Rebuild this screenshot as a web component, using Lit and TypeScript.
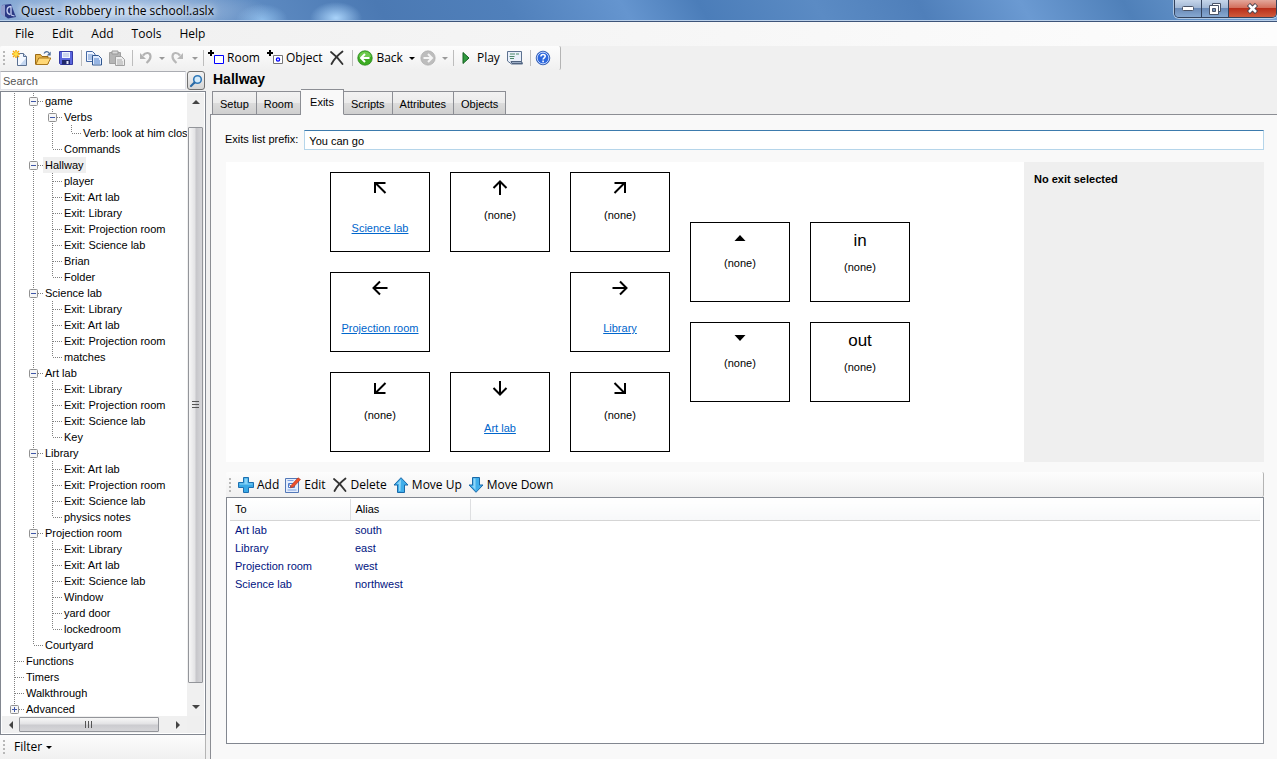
import { LitElement, html, svg, css, nothing, SVGTemplateResult } from "lit";
import { customElement, property, state } from "lit/decorators.js";
import { classMap } from "lit/directives/class-map.js";

const ICONS: Record<string, SVGTemplateResult> = {
  fresh: svg`<path d="M5.500 3.500h6l3 3v9h-9z" fill="#f4f8ff" stroke="#5b7192"/><path d="M11.500 3.500v3h3" fill="#cddcf2" stroke="#5b7192"/><path d="M14 8v7H8z" fill="#c3d6f0"/><path d="M4 0v8M0 4h8M1 1l6 6M7 1L1 7" stroke="#f5a500" stroke-width="1.400"/><circle cx="4" cy="4" r="2" fill="#ffe14a"/>`,
  open: svg`<path d="M.5 14V4.500h5l1.500 2h6V14z" fill="#e9b84e" stroke="#9b6a14"/><path d="M.8 14.500l3-6.500h12l-3.300 6.500z" fill="#ffd877" stroke="#a8761c"/><path d="M9 3.500c1.500-2.500 4-2.500 5-.2" fill="none" stroke="#4d6d9a" stroke-width="1.200"/><path d="M15.700 1.500v4h-4z" fill="#4d6d9a"/>`,
  save: svg`<path d="M1.500 1.500h13v13h-12l-1-1z" fill="#5b66dd" stroke="#363ba5"/><path d="M4 2h8v6H4z" fill="#eef3ff"/><path d="M5 4h6M5 6h6" stroke="#a9b4dc"/><path d="M4 10h8v4.500H4z" fill="#20286a"/><path d="M8.500 11h2v3h-2z" fill="#e4e8ff"/>`,
  copy: svg`<path d="M.5 1.500h6l2.500 2.500v7.500h-8.500z" fill="#eef4ff" stroke="#466aa6"/><path d="M2 5h5M2 7h5M2 9h5" stroke="#6d93cf"/><path d="M6.500 5.500h6l3 3v6.500h-9z" fill="#e0ebff" stroke="#2f568f"/><path d="M8 9h5M8 11h6M8 13h6" stroke="#4f80c8"/>`,
  paste: svg`<path d="M.5 2.500h11v11H.5z" fill="#b5b5b5" stroke="#a0a0a0"/><path d="M3 1h6v3H3z" fill="#d9d9d9" stroke="#999"/><path d="M6.500 6.500h6l3 3v6h-9z" fill="#eee" stroke="#a0a0a0"/><path d="M8 10h5M8 12h6M8 14h6" stroke="#aaa"/>`,
  undo: svg`<path d="M6 5.500C8.500 2 13.500 2 13.500 6.500c0 3-1.500 4.500-4 6.500" fill="none" stroke="#b2b2b2" stroke-width="2.200"/><path d="M3 3v6h6z" fill="#b2b2b2"/>`,
  redo: svg`<path d="M10 5.500C7.500 2 2.500 2 2.500 6.500c0 3 1.500 4.500 4 6.500" fill="none" stroke="#b8b8b8" stroke-width="2.200"/><path d="M13 3v6H7z" fill="#b8b8b8"/>`,
  room: svg`<path d="M3 0v6M0 3h6" stroke="#000" stroke-width="2"/><path d="M6.500 5.500h9v8h-9z" fill="#fff" stroke="#0000ff"/>`,
  object: svg`<path d="M3 0v6M0 3h6" stroke="#000" stroke-width="2"/><path d="M6.500 5.500h9v8h-9z" fill="#fff" stroke="#777"/><circle cx="11" cy="9.500" r="1.600" fill="none" stroke="#0000ff" stroke-width="1.300"/>`,
  cross: svg`<path d="M2 2c4 3 8 7 11.500 12M13.500 1.500C9 5 5 9 2.500 14" fill="none" stroke="#333" stroke-width="1.800" stroke-linecap="round"/>`,
  back: svg`<circle cx="8" cy="8" r="7.300" fill="#3cab22" stroke="#1f7a12" stroke-width=".6"/><path d="M2 7a6 5.500 0 0 1 12 0z" fill="#8fe06c" opacity=".6"/><path d="M12.500 8H5M8 4L4 8l4 4" fill="none" stroke="#fff" stroke-width="2"/>`,
  forward: svg`<circle cx="8" cy="8" r="7.200" fill="#bdbdbd" stroke="#a6a6a6" stroke-width=".6"/><path d="M3.500 8H11M8 4l4 4-4 4" fill="none" stroke="#f5f5f5" stroke-width="2"/>`,
  play: svg`<path d="M5 2.500v11l6-5.500z" fill="#2f9b3e" stroke="#14601f"/>`,
  script: svg`<path d="M.5 1.500h14v10l1 2.500H4.500L.5 11z" fill="#e9f0fa" stroke="#5d7290"/><path d="M3 4h5M9 4h3M2.500 6.500h5M3 8.500h4" stroke="#4c8a6a"/><path d="M4 11.500h10.500l.5 2H5z" fill="#9cadc6" stroke="#50637f"/>`,
  help: svg`<circle cx="8" cy="8" r="6.800" fill="#2d67dd" stroke="#2450a6" stroke-width=".8"/><circle cx="8" cy="8" r="5.800" fill="none" stroke="#cfdfff" stroke-width=".9"/><path d="M5.900 6.600c0-2.800 4.300-2.700 4.300-.3 0 1.500-2.100 1.500-2.100 3.200M8.100 10.500v1.700" fill="none" stroke="#fff" stroke-width="1.600"/>`,
  add: svg`<path d="M5.500.5h5v5h5v5h-5v5h-5v-5h-5v-5h5z" fill="#3aa9e6" stroke="#1c6fb0"/><path d="M6.500 1.500h3v5h5v1h-13v-1h5z" fill="#8bd5f8"/>`,
  edit: svg`<path d="M.5 1.500h13v14H.5z" fill="#e4edfc" stroke="#5378b8"/><path d="M2.500 3.500h6M2.500 13h9" stroke="#7da0e0"/><path d="M3.500 6.500h6v4h-6z" fill="#fff" stroke="#4b79cd"/><path d="M4.500 7.500l1.500 2.500 1-.5" fill="none" stroke="#2c3f8c"/><path d="M6 8.500L13 .8l2.500 1.700L8.500 10l-3 .8z" fill="#ee4e2b" stroke="#a8381e" stroke-width=".6"/>`,
  up: svg`<path d="M8 .7l7 7.300h-3.500v7.500h-7V8H1z" fill="#40aeea" stroke="#1a69a8"/><path d="M8 2.500L4 7h2v7h1.500z" fill="#8fd6f8"/>`,
  down: svg`<path d="M8 15.300L15 8h-3.500V.5h-7V8H1z" fill="#40aeea" stroke="#1a69a8"/><path d="M5.500 1.500h2V13L4 9h1.500z" fill="#8fd6f8"/>`,
  find: svg`<circle cx="9.500" cy="6.500" r="3.800" fill="#d4ebfb" stroke="#2f78b8" stroke-width="1.600"/><path d="M6.500 9.500L3 13" stroke="#2a6aa6" stroke-width="2.200" stroke-linecap="round"/>`,
  logo: svg`<path d="M1 2l9-1 3 8 2 5-8 1.500L1 11z" fill="#2b3a85"/><path d="M0 2.500l4-.8v12.600L0 11z" fill="#8f9ccc"/><path d="M9.500 3.500c-4.500.5-4.500 7-.5 8M10 3v9M10 12l3.500 1" fill="none" stroke="#c6d0f2" stroke-width="1.300"/>`,
  n: svg`<path d="M8 15V1.500M1.500 8L8 1.500 14.500 8" fill="none" stroke="#000" stroke-width="2"/>`,
  s: svg`<path d="M8 1v13.500M1.500 8L8 14.500 14.500 8" fill="none" stroke="#000" stroke-width="2"/>`,
  w: svg`<path d="M15.500 8H2M8 1.500L1.500 8 8 14.500" fill="none" stroke="#000" stroke-width="2"/>`,
  e: svg`<path d="M.5 8H14M8 1.500L14.500 8 8 14.500" fill="none" stroke="#000" stroke-width="2"/>`,
  nw: svg`<path d="M13.500 13L3.500 3M3 13V3h10.500" fill="none" stroke="#000" stroke-width="2"/>`,
  ne: svg`<path d="M2.500 13l10-10M13 13V3H2.500" fill="none" stroke="#000" stroke-width="2"/>`,
  sw: svg`<path d="M13.500 3L3.500 13M3 3v10h10.500" fill="none" stroke="#000" stroke-width="2"/>`,
  se: svg`<path d="M2.500 3l10 10M13 3v10H2.500" fill="none" stroke="#000" stroke-width="2"/>`,
  tup: svg`<path d="M2.500 11L8 5l5.500 6z"/>`,
  tdown: svg`<path d="M2.500 5L8 11l5.500-6z"/>`,
};

const icon = (name: string) => html`<svg class="icon" viewBox="0 0 16 16" width="16" height="16" aria-hidden="true">${ICONS[name]}</svg>`;

type Row = [guides: string, label: string];

// One letter per indent column: "|" passing line, "+" branch, "L" last branch,
// "-" open branch, "x" closed last branch.
const TREE: Row[] = [
  ["|-", "game"],
  ["||-", "Verbs"],
  ["|||L", "Verb: look at him close"],
  ["||L", "Commands"],
  ["|-", "Hallway"],
  ["||+", "player"],
  ["||+", "Exit: Art lab"],
  ["||+", "Exit: Library"],
  ["||+", "Exit: Projection room"],
  ["||+", "Exit: Science lab"],
  ["||+", "Brian"],
  ["||L", "Folder"],
  ["|-", "Science lab"],
  ["||+", "Exit: Library"],
  ["||+", "Exit: Art lab"],
  ["||+", "Exit: Projection room"],
  ["||L", "matches"],
  ["|-", "Art lab"],
  ["||+", "Exit: Library"],
  ["||+", "Exit: Projection room"],
  ["||+", "Exit: Science lab"],
  ["||L", "Key"],
  ["|-", "Library"],
  ["||+", "Exit: Art lab"],
  ["||+", "Exit: Projection room"],
  ["||+", "Exit: Science lab"],
  ["||L", "physics notes"],
  ["|-", "Projection room"],
  ["||+", "Exit: Library"],
  ["||+", "Exit: Art lab"],
  ["||+", "Exit: Science lab"],
  ["||+", "Window"],
  ["||+", "yard door"],
  ["||L", "lockedroom"],
  ["|L", "Courtyard"],
  ["+", "Functions"],
  ["+", "Timers"],
  ["+", "Walkthrough"],
  ["x", "Advanced"],
];

@customElement("quest-tree")
class QuestTree extends LitElement {
  @state() selected = 4;

  static styles = css`
    :host { display: flex; flex: 1; min-height: 0; border: 1px solid #828790; background: #fff; padding: 1px; box-sizing: border-box; }
    .grid { flex: 1; min-width: 0; display: grid; grid-template-columns: minmax(0, 1fr) 17px; grid-template-rows: minmax(0, 1fr) 17px; }
    .rows { list-style: none; margin: 0; padding: 0 0 0 3px; overflow: hidden; }
    .row { display: flex; height: 16px; white-space: nowrap; cursor: default; }
    .guide { flex: none; display: block; }
    .text { font: 11px/16px "Liberation Sans", Arial, sans-serif; padding: 0 2px; }
    .picked { background: #efefef; }
    .bar { display: flex; align-items: center; background: #f0f0f0; }
    .vertical { flex-direction: column; }
    .end { flex: none; display: flex; align-items: center; justify-content: center; width: 17px; height: 17px; }
    .thumb { display: flex; align-items: center; justify-content: center; box-sizing: border-box; border: 1px solid #93959a; border-radius: 1px; }
    .vertical .thumb { width: 15px; flex: 558; background: linear-gradient(90deg, #f7f7f7, #e3e3e5 45%, #c6c6ca 55%, #d6d6d9); }
    .across .thumb { height: 15px; flex: 140; background: linear-gradient(#f7f7f7, #e3e3e5 45%, #cbcbcf 55%, #d6d6d9); }
    .vertical .before { flex: 17; }
    .vertical .after { flex: 16; }
    .across .after { flex: 11; }
    .corner { background: #efefef; }
  `;

  private guide(kind: string) {
    const box = kind === "-" || kind === "x";
    const down = kind === "|" || kind === "+" || kind === "-";
    return html`<svg class="guide" width="19" height="16" viewBox="0 0 19 16" aria-hidden="true">
      <path d=${down ? "M9.5 0v16" : "M9.5 0v8"} stroke="#808080" stroke-dasharray="1 1"/>
      ${kind === "|" ? nothing : svg`<path d="M10 8.500h9" stroke="#808080" stroke-dasharray="1 1"/>`}
      ${box ? svg`<rect x="5.500" y="4.500" width="8" height="8" rx="1" fill="#f6f6f6" stroke="#919191"/><path d=${kind === "x" ? "M7 8.5h5M9.5 6v5" : "M7 8.5h5"} stroke="#3f57a8"/>` : nothing}
    </svg>`;
  }

  render() {
    return html`<div class="grid">
      <ul class="rows" role="tree">
        ${TREE.map(([guides, label], i) => html`<li class="row" role="treeitem" aria-level=${guides.length} aria-selected=${i === this.selected} @click=${() => (this.selected = i)}>
          ${[...guides].map((g) => this.guide(g))}<span class=${classMap({ text: true, picked: i === this.selected })}>${label}</span>
        </li>`)}
      </ul>
      <div class="bar vertical">
        <span class="end"><svg width="8" height="5"><path d="M0 5l4-4 4 4z" fill="#444"/></svg></span>
        <span class="before"></span>
        <span class="thumb"><svg width="8" height="8"><path d="M0 .5h7M0 3.500h7M0 6.500h7" stroke="#555"/></svg></span>
        <span class="after"></span>
        <span class="end"><svg width="8" height="5"><path d="M0 0l4 4 4-4z" fill="#444"/></svg></span>
      </div>
      <div class="bar across">
        <span class="end"><svg width="5" height="8"><path d="M5 0L1 4l4 4z" fill="#444"/></svg></span>
        <span class="thumb"><svg width="8" height="8"><path d="M.5 0v7M3.500 0v7M6.500 0v7" stroke="#555"/></svg></span>
        <span class="after"></span>
        <span class="end"><svg width="5" height="8"><path d="M0 0l4 4-4 4z" fill="#444"/></svg></span>
      </div>
      <span class="corner"></span>
    </div>`;
  }
}

@customElement("exit-box")
class ExitBox extends LitElement {
  @property() glyph = "";
  @property() word = "";
  @property() to = "";

  static styles = css`
    :host { display: flex; flex-direction: column; align-items: center; box-sizing: border-box; width: 100px; height: 80px; border: 1px solid #000; background: #fff; font: 11px/14px "Liberation Sans", Arial, sans-serif; }
    .glyph { display: flex; align-items: center; justify-content: center; height: 30px; }
    .word { font-size: 17px; line-height: 36px; height: 37px; }
    .none { margin-top: 5px; }
    .vertical { margin-top: 3px; }
    .worded { margin-top: 0; }
    .link { margin-top: 18px; color: #0066cc; }
  `;

  render() {
    const none = classMap({ none: true, vertical: this.glyph.startsWith("t"), worded: !!this.word });
    return html`${this.word ? html`<span class="word">${this.word}</span>` : html`<span class="glyph">${icon(this.glyph)}</span>`}
      ${this.to ? html`<a class="link" href="#">${this.to}</a>` : html`<span class=${none}>(none)</span>`}`;
  }
}

@customElement("app-root")
class AppRoot extends LitElement {
  @state() tab = "Exits";

  static styles = css`
    :host { display: flex; flex-direction: column; height: 100vh; background: #f0f0f0; color: #000; font: 11px/14px "Liberation Sans", Arial, sans-serif; overflow: hidden; }
    button { font: inherit; color: inherit; background: none; border: 0; padding: 0; margin: 0; }
    .ui { font: 12px/16px "Open Sans", "Noto Sans", sans-serif; }
    .icon { flex: none; display: block; }

    .title { flex: none; display: flex; align-items: center; height: 22px; box-sizing: border-box; border-bottom: 1px solid #3d5479; box-shadow: inset 0 -1px #b9cfe9;
      background: radial-gradient(ellipse 150px 26px at 120px 11px, rgba(205, 222, 244, .85), rgba(205, 222, 244, 0)), radial-gradient(ellipse 26px 16px at 336px 18px, #a9d3fa, rgba(180, 220, 255, 0)), radial-gradient(ellipse 26px 16px at 262px 20px, #8dbcea, rgba(140, 190, 235, 0)), linear-gradient(60deg, #7ba0cf 0%, #5e8bc2 20%, #4b79b3 30%, #5080bb 40%, #6595cf 49%, #4b7db9 55%, #5b8bc4 64%, #4f7fba 72%, #6b9ad2 80%, #4f80b9 88%, #79a6da 100%); }
    .logo { flex: none; display: flex; padding: 0 4px 0 1px; }
    .name { flex: 1; margin: 0; font-weight: 400; text-shadow: 0 0 6px #fff, 0 0 8px #fff; }
    .controls { flex: none; align-self: flex-start; display: flex; height: 18px; box-sizing: border-box; border: 1px solid #33425c; border-top: 0; border-radius: 0 0 5px 5px; box-shadow: 0 0 0 1px rgba(255, 255, 255, .5); overflow: hidden; }
    .control { display: flex; align-items: center; justify-content: center; width: 27px; background: linear-gradient(#c6d6ea, #a2b8d5 45%, #6b8bb7 50%, #86a8d2); border-right: 1px solid #33425c; }
    .close { width: 47px; border-right: 0; background: linear-gradient(#e3a79b, #d3705d 45%, #b92f1b 50%, #cf5a3c); }

    .menu { flex: none; display: flex; height: 24px; align-items: center; padding-left: 6px; background: linear-gradient(90deg, #efefef, #fdfdfd); }
    .entry { padding: 0 9px; }

    .tools { flex: none; display: flex; align-items: center; align-self: flex-start; height: 24px; box-sizing: border-box; padding: 0 5px 0 3px; background: linear-gradient(#fdfdfd, #f0f0f0); border-right: 1px solid #b4b4b4; border-radius: 2px; }
    .grip { flex: none; width: 2px; height: 14px; background: repeating-linear-gradient(#b8b8b8 0 2px, transparent 2px 4px); }
    .tools .grip { margin-right: 4px; }
    .tool { display: flex; align-items: center; gap: 3px; height: 22px; padding: 0 4px 0 3px; white-space: nowrap; }
    .rule { flex: none; width: 1px; height: 16px; margin: 0 1px 0 3px; background: #bdbdbd; }
    .drop { display: flex; padding: 0 2px; }

    .work { flex: 1; min-height: 0; display: flex; }
    .side { flex: none; width: 206px; display: flex; flex-direction: column; padding-top: 1px; }
    .search { display: flex; gap: 1px; height: 20px; }
    .query { flex: 1; min-width: 0; box-sizing: border-box; height: 19px; border: 1px solid #e2e3ea; border-top-color: #abadb3; padding: 0 2px; font: 11px "Liberation Sans", Arial, sans-serif; background: #fff; outline: 0; }
    .query::placeholder { color: #555; opacity: 1; }
    .find { flex: none; display: flex; align-items: center; justify-content: center; box-sizing: border-box; width: 18px; height: 19px; margin-right: 1px; border: 1px solid #707070; border-radius: 3px; background: linear-gradient(#f3f3f3, #d5d5d5); }
    .filter { flex: none; display: flex; align-items: center; gap: 9px; height: 24px; padding-left: 3px; background: linear-gradient(#fcfcfc, #f0f0f0); border-right: 1px solid #b4b4b4; }
    .choose { display: flex; align-items: center; gap: 4px; }

    .main { flex: 1; min-width: 0; margin-left: 4px; display: flex; flex-direction: column; }
    .heading { margin: 0; padding-left: 3px; font-size: 14px; line-height: 19px; font-weight: 700; }
    .tabs { flex: none; display: flex; align-items: flex-end; height: 26px; padding-left: 2px; }
    .tab { height: 24px; padding: 2px 7px 0; border: 1px solid #8c8e94; border-left-width: 0; background: linear-gradient(#f2f2f2, #ebebeb 50%, #dcdcdc 50%, #cfcfcf); }
    .tab:first-child { border-left-width: 1px; }
    .current { height: 26px; padding: 0 9px; background: #f9f9f9; border-bottom-color: #f9f9f9; z-index: 1; }
    .page { flex: 1; min-height: 0; display: flex; flex-direction: column; margin-top: -1px; border-top: 1px solid #8c8e94; border-left: 1px solid #8c8e94; background: #f9f9f9; padding: 15px 13px 15px 15px; }
    .prefix { display: flex; gap: 6px; height: 20px; margin-left: -1px; }
    .prefix label { line-height: 18px; white-space: nowrap; }
    .prefix input { flex: 1; min-width: 0; height: 20px; box-sizing: border-box; border: 1px solid #b5d5ea; border-top-color: #3d7bad; padding: 2px 4px 0; font: 11px "Liberation Sans", Arial, sans-serif; outline: 0; background: #fff; }
    .map { flex: none; display: flex; margin-top: 12px; height: 300px; }
    .compass { flex: 1; min-width: 0; box-sizing: border-box; display: flex; align-items: center; gap: 20px; padding-left: 104px; background: #fff; }
    .rose { display: grid; grid-template-columns: repeat(3, 100px); gap: 20px; }
    .others { grid-template-columns: repeat(2, 100px); }
    .detail { flex: none; width: 240px; box-sizing: border-box; padding: 10px; background: #efefef; font-weight: 700; }
    .actions { align-self: stretch; margin-top: 10px; height: 25px; }
    .actions .tool { padding: 0 3px; }
    .list { flex: 1; min-height: 0; box-sizing: border-box; border: 1px solid #828790; background: #fff; padding: 1px 3px; }
    .table { width: 100%; border-collapse: collapse; table-layout: fixed; }
    .table th { height: 21px; box-sizing: border-box; padding: 0 5px; text-align: left; font-weight: 400; background: linear-gradient(#fff, #f7f8f9); border-bottom: 1px solid #d5d5d5; border-right: 1px solid #dedfe1; }
    .table th:last-child { border-right: 0; }
    .table td { height: 18px; padding: 0 5px; color: #00137f; }
    .column { width: 120px; }
  `;

  private drop(color = "#000") {
    return html`<svg width="6" height="3" viewBox="0 0 6 3" aria-hidden="true"><path d="M0 0h6L3 3z" fill=${color}/></svg>`;
  }

  private tool(name: string, label: string, text = false) {
    return html`<button class="tool" aria-label=${label}>${icon(name)}${text ? label : nothing}</button>`;
  }

  private menuDrop(label: string, color?: string) {
    return html`<button class="drop" aria-label=${label}>${this.drop(color)}</button>`;
  }

  render() {
    return html`
      <header class="title ui">
        <span class="logo">${icon("logo")}</span>
        <h1 class="name ui">Quest - Robbery in the school!.aslx</h1>
        <div class="controls">
          <button class="control" aria-label="Minimize"><svg width="12" height="5"><rect x=".5" y=".5" width="11" height="4" rx="1" fill="#fff" stroke="#4a5468"/></svg></button>
          <button class="control" aria-label="Restore"><svg width="13" height="12"><path d="M3.500.5h8v8h-8z" fill="#fff" stroke="#4a5468"/><path d="M.5 2.500h9v9h-9z" fill="#fff" stroke="#4a5468"/><path d="M3.500 5.500h3v3h-3z" fill="#7795bd" stroke="#4a5468"/></svg></button>
          <button class="control close" aria-label="Close"><svg width="13" height="11"><path d="M2.500 1.500l8 8M10.500 1.500l-8 8" stroke="#4a4350" stroke-width="4.500"/><path d="M3 2l7 7M10 2L3 9" stroke="#fff" stroke-width="2.500"/></svg></button>
        </div>
      </header>
      <nav class="menu ui">${["File", "Edit", "Add", "Tools", "Help"].map((m) => html`<button class="entry">${m}</button>`)}</nav>
      <div class="tools ui" role="toolbar" aria-label="Standard">
        <span class="grip"></span>
        ${this.tool("fresh", "New")}${this.tool("open", "Open")}${this.tool("save", "Save")}
        <span class="rule"></span>
        ${this.tool("copy", "Copy")}${this.tool("paste", "Paste")}
        <span class="rule"></span>
        ${this.tool("undo", "Undo")}${this.menuDrop("Undo history", "#999")}${this.tool("redo", "Redo")}${this.menuDrop("Redo history", "#999")}
        <span class="rule"></span>
        ${this.tool("room", "Room", true)}${this.tool("object", "Object", true)}${this.tool("cross", "Delete")}
        <span class="rule"></span>
        ${this.tool("back", "Back", true)}${this.menuDrop("Back history")}${this.tool("forward", "Forward")}${this.menuDrop("Forward history", "#999")}
        <span class="rule"></span>
        ${this.tool("play", "Play", true)}${this.tool("script", "Script view")}
        <span class="rule"></span>
        ${this.tool("help", "Help")}
      </div>
      <div class="work">
        <aside class="side">
          <div class="search">
            <input class="query" type="text" placeholder="Search" aria-label="Search" />
            <button class="find" aria-label="Find">${icon("find")}</button>
          </div>
          <quest-tree></quest-tree>
          <div class="filter ui"><span class="grip"></span><button class="choose">Filter ${this.drop()}</button></div>
        </aside>
        <main class="main">
          <h2 class="heading">Hallway</h2>
          <div class="tabs" role="tablist">
            ${["Setup", "Room", "Exits", "Scripts", "Attributes", "Objects"].map((t) => html`<button role="tab" aria-selected=${t === this.tab} class=${classMap({ tab: true, current: t === this.tab })} @click=${() => (this.tab = t)}>${t}</button>`)}
          </div>
          <section class="page">
            <div class="prefix">
              <label for="prefix">Exits list prefix:</label>
              <input id="prefix" type="text" .value=${"You can go"} />
            </div>
            <div class="map">
              <div class="compass">
                <div class="rose">
                  <exit-box glyph="nw" to="Science lab"></exit-box>
                  <exit-box glyph="n"></exit-box>
                  <exit-box glyph="ne"></exit-box>
                  <exit-box glyph="w" to="Projection room"></exit-box>
                  <span></span>
                  <exit-box glyph="e" to="Library"></exit-box>
                  <exit-box glyph="sw"></exit-box>
                  <exit-box glyph="s" to="Art lab"></exit-box>
                  <exit-box glyph="se"></exit-box>
                </div>
                <div class="rose others">
                  <exit-box glyph="tup"></exit-box>
                  <exit-box word="in"></exit-box>
                  <exit-box glyph="tdown"></exit-box>
                  <exit-box word="out"></exit-box>
                </div>
              </div>
              <div class="detail">No exit selected</div>
            </div>
            <div class="tools actions ui" role="toolbar" aria-label="Exits">
              <span class="grip"></span>
              ${this.tool("add", "Add", true)}${this.tool("edit", "Edit", true)}${this.tool("cross", "Delete", true)}${this.tool("up", "Move Up", true)}${this.tool("down", "Move Down", true)}
            </div>
            <div class="list">
              <table class="table">
                <colgroup><col class="column" /><col class="column" /><col /></colgroup>
                <thead><tr><th>To</th><th>Alias</th><th></th></tr></thead>
                <tbody>
                  ${[["Art lab", "south"], ["Library", "east"], ["Projection room", "west"], ["Science lab", "northwest"]].map(([to, alias]) => html`<tr><td>${to}</td><td>${alias}</td><td></td></tr>`)}
                </tbody>
              </table>
            </div>
          </section>
        </main>
      </div>
    `;
  }

  firstUpdated() {
    const field = this.renderRoot.querySelector<HTMLInputElement>("#prefix");
    field?.focus();
    field?.setSelectionRange(0, 0);
  }
}
